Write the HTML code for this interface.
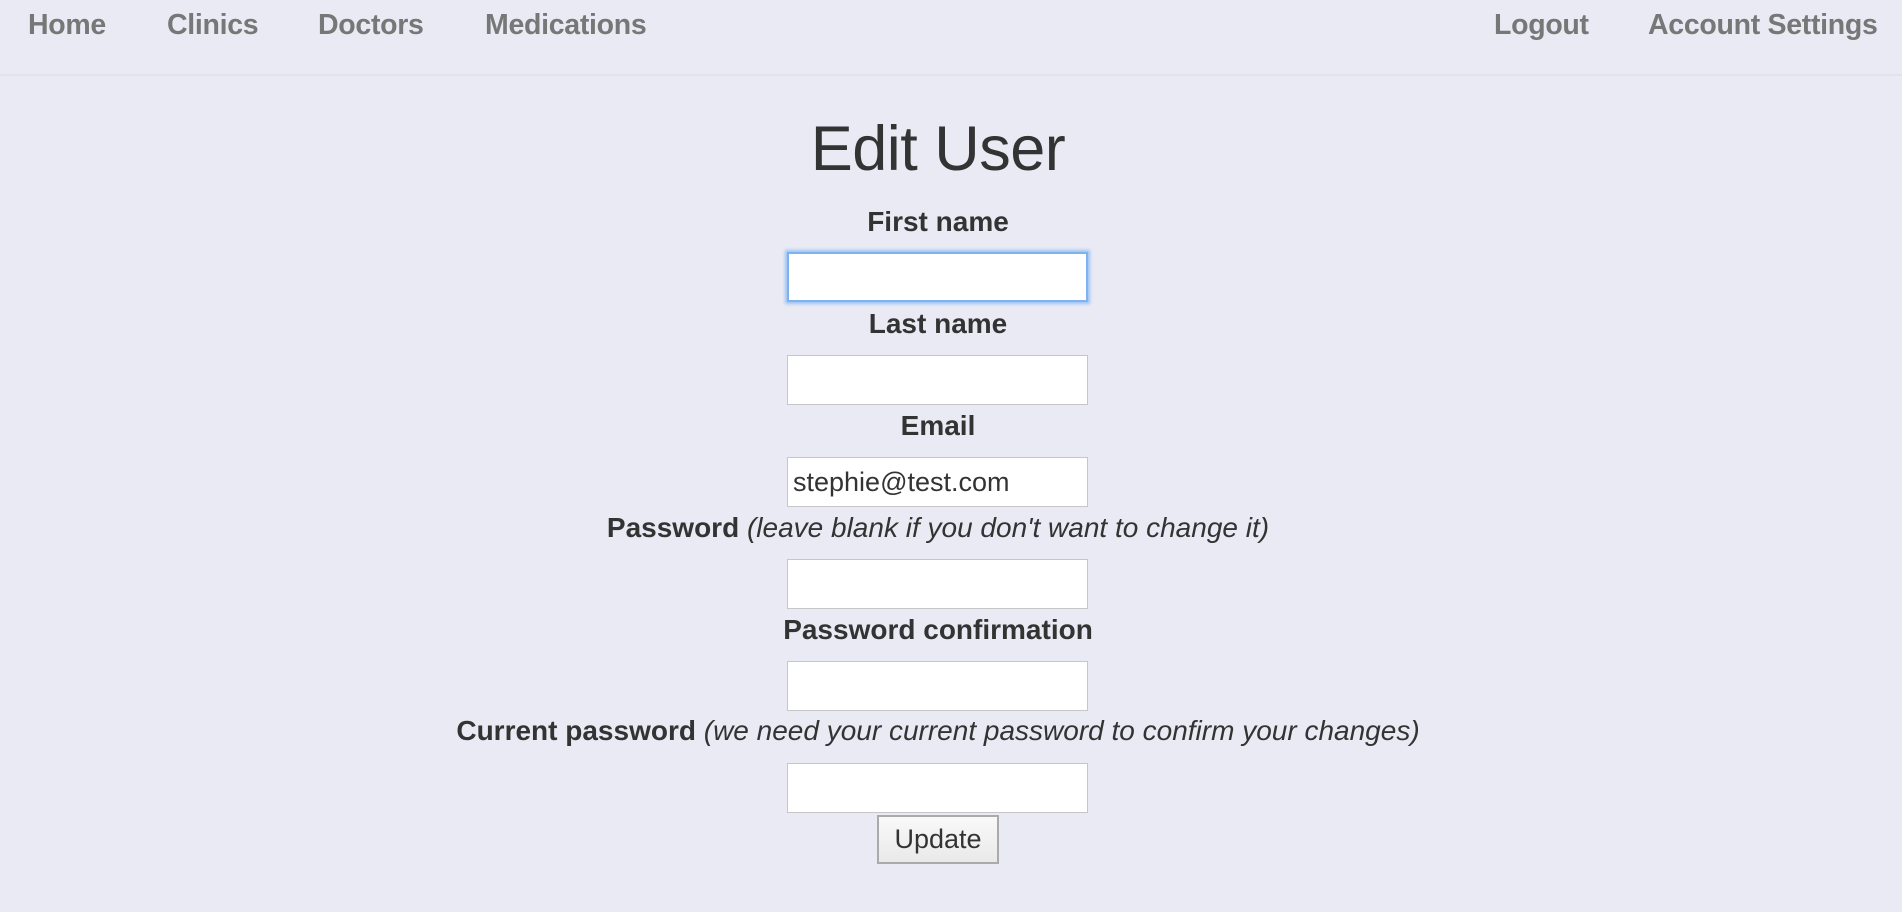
<!DOCTYPE html>
<html><head><meta charset="utf-8"><style>
html,body{margin:0;padding:0;}
body{width:1902px;height:912px;background:#e9eaf4;font-family:"Liberation Sans",Helvetica,Arial,sans-serif;color:#333;position:relative;overflow:hidden;}
.nav{position:absolute;top:0;left:0;width:1902px;height:74px;border-bottom:2px solid #e2e3ea;}
.nav a{position:absolute;top:9px;font-size:28.5px;font-weight:bold;color:#777;text-decoration:none;letter-spacing:-0.3px;}
h1{position:absolute;top:113px;left:0;width:1876px;margin:0;text-align:center;font-size:63px;font-weight:normal;line-height:72px;letter-spacing:-0.5px;}
.lbl{position:absolute;left:0;width:1876px;text-align:center;font-size:28px;font-weight:bold;line-height:30px;}
.lbl i{font-weight:normal;}
.in{position:absolute;left:787px;width:299px;height:48px;background:#fff;border:1px solid #c6c6c6;box-sizing:content-box;font-size:27px;line-height:48px;}
.focus{border:2px solid #7fb2f0;box-shadow:0 0 3px 2px #9cc4f5;left:787px;width:297px;height:46px;}
.btn{position:absolute;left:877px;top:815px;width:118px;height:45px;border:2px solid #aaa;background:linear-gradient(#f9f9f9,#e9e9e9);text-align:center;font-size:27px;line-height:45px;color:#333;}
</style></head><body>
<div class="nav">
<a style="left:28px">Home</a>
<a style="left:167px">Clinics</a>
<a style="left:318px">Doctors</a>
<a style="left:485px">Medications</a>
<a style="left:1494px">Logout</a>
<a style="left:1648px">Account Settings</a>
</div>
<h1>Edit User</h1>
<div class="lbl" style="top:207px">First name</div>
<div class="in focus" style="top:252px"></div>
<div class="lbl" style="top:309px">Last name</div>
<div class="in" style="top:355px"></div>
<div class="lbl" style="top:411px">Email</div>
<div class="in" style="top:457px"><span style="padding-left:5px">stephie@test.com</span></div>
<div class="lbl" style="top:513px">Password <i>(leave blank if you don't want to change it)</i></div>
<div class="in" style="top:559px"></div>
<div class="lbl" style="top:615px">Password confirmation</div>
<div class="in" style="top:661px"></div>
<div class="lbl" style="top:716px">Current password <i>(we need your current password to confirm your changes)</i></div>
<div class="in" style="top:763px"></div>
<div class="btn">Update</div>
</body></html>
